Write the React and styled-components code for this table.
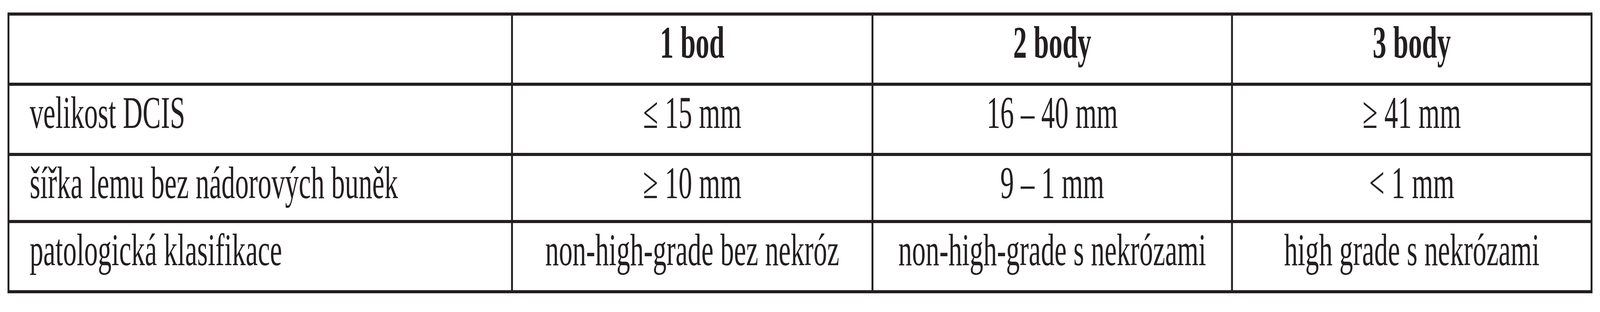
import React, { useState, useEffect } from "react";
import styled, { createGlobalStyle } from "styled-components";

const DESIGN_WIDTH = 6800;

const Global = createGlobalStyle`
  html, body {
    margin: 0;
    padding: 0;
    background: #ffffff;
    overflow: hidden;
  }
  body {
    font-family: "Liberation Serif", "Times New Roman", serif;
    color: #231f20;
  }
`;

const Viewport = styled.div`
  width: 100vw;
  height: 800px;
  overflow: hidden;
`;

const Frame = styled.div`
  width: ${DESIGN_WIDTH}px;
  padding: 32px;
  box-sizing: border-box;
  transform-origin: 0 0;
`;

const Table = styled.div`
  display: grid;
  grid-template-columns: 2132px 1524px 1520px 1520px;
  grid-template-rows: 172px 172px 164px 172px;
  gap: 8px;
  padding: 8px;
  background: #231f20;
  width: max-content;
`;

const Cell = styled.div`
  display: flex;
  justify-content: ${(p) => (p.$first ? "flex-start" : "center")};
  align-items: flex-start;
  background: #ffffff;
  font-family: "Liberation Serif", "Times New Roman", serif;
  font-size: 116px;
  line-height: 116px;
  font-weight: ${(p) => (p.$head ? 700 : 400)};
  color: #231f20;
  padding: 11px 0 0 ${(p) => (p.$first ? "86px" : "0")};
  white-space: nowrap;
  box-sizing: border-box;
`;

const header = ["", "1 bod", "2 body", "3 body"];
const rows = [
  ["velikost DCIS", "≤ 15 mm", "16 – 40 mm", "≥ 41 mm"],
  ["šířka lemu bez nádorových buněk", "≥ 10 mm", "9 – 1 mm", "< 1 mm"],
  [
    "patologická klasifikace",
    "non-high-grade bez nekróz",
    "non-high-grade s nekrózami",
    "high grade s nekrózami",
  ],
];

function getScale() {
  if (typeof window === "undefined") return 1;
  const w = window.innerWidth || DESIGN_WIDTH;
  return Math.min(1, w / DESIGN_WIDTH);
}

export default function App() {
  const [scale, setScale] = useState(getScale);
  useEffect(() => {
    const onResize = () => setScale(getScale());
    window.addEventListener("resize", onResize);
    return () => window.removeEventListener("resize", onResize);
  }, []);

  return (
    <>
      <Global />
      <Viewport>
        <Frame style={{ transform: `scaleX(${scale})` }}>
          <Table>
            {header.map((h, i) => (
              <Cell key={"h" + i} $head $first={i === 0}>
                {h}
              </Cell>
            ))}
            {rows.map((r, ri) =>
              r.map((c, ci) => (
                <Cell key={ri + "-" + ci} $first={ci === 0}>
                  {c}
                </Cell>
              ))
            )}
          </Table>
        </Frame>
      </Viewport>
    </>
  );
}
